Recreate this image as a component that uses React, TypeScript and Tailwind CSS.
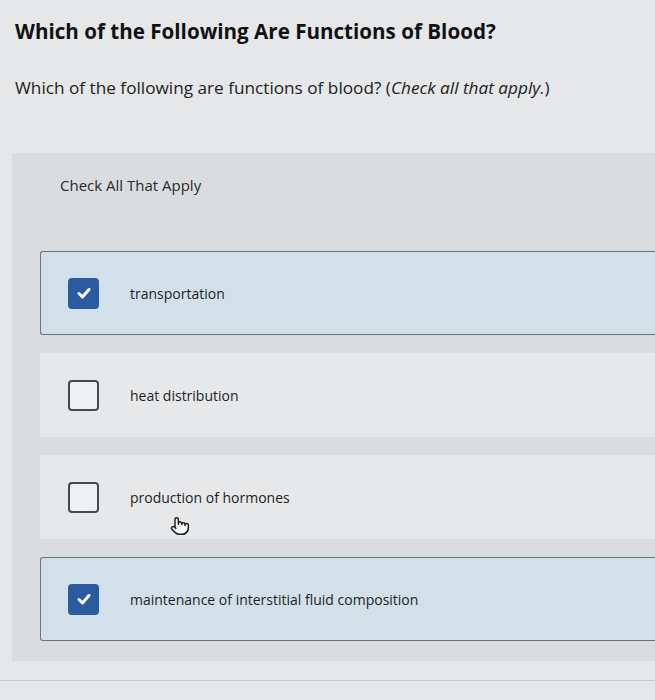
import React from "react";
import { Pointer } from "lucide-react";

const options = [
  { label: "transportation", checked: true },
  { label: "heat distribution", checked: false },
  { label: "production of hormones", checked: false },
  { label: "maintenance of interstitial fluid composition", checked: true },
];

function Check({ checked }: { checked: boolean }) {
  if (checked) {
    return (
      <div className="w-[31px] h-[31px] rounded-[4px] bg-[#2a5aa0] flex items-center justify-center shrink-0">
        <svg width="16" height="16" viewBox="0 0 16 16">
          <path d="M3 8.5 L6.5 12 L13 4.5" fill="none" stroke="#ffffff" strokeWidth="3" strokeLinecap="round" strokeLinejoin="round" />
        </svg>
      </div>
    );
  }
  return <div className="w-[31px] h-[31px] rounded-[4px] border-2 border-[#444a50] bg-[#eef0f2] shrink-0" />;
}

export default function App() {
  return (
    <div
      className="w-[655px] h-[700px] overflow-hidden bg-[#e5e7e9] text-[#1c1c1c] relative"
      style={{ fontFamily: "'Open Sans', Lato, sans-serif" }}
    >
      <div className="pt-[17px] pl-[15px]">
        <h1 className="text-[20.6px] font-bold leading-[28px] text-[#111]">
          Which of the Following Are Functions of Blood?
        </h1>
        <p className="mt-[32px] text-[17.2px] leading-[22px] text-[#222]">
          Which of the following are functions of blood? (<i>Check all that apply.</i>)
        </p>
      </div>
      <div className="mt-[54px] ml-[12px] bg-[#dadde0] pl-[28px] pt-[22px] pb-[20px]">
        <div className="pl-[20px] text-[15px] leading-[20px] text-[#2a2a2a]">Check All That Apply</div>
        <div className="mt-[56px] flex flex-col gap-[18px]">
          {options.map((o, i) => (
            <div
              key={i}
              className={
                o.checked
                  ? "h-[84px] flex items-center bg-[#d2e0ea] border border-r-0 border-[#6d7378] rounded-l-[3px]"
                  : "h-[84px] flex items-center bg-[#e6e8ea] border border-transparent"
              }
            >
              <div className="pl-[27px] pr-[31px]">
                <Check checked={o.checked} />
              </div>
              <span className="text-[14px] text-[#1e1e1e]">{o.label}</span>
            </div>
          ))}
        </div>
      </div>
      <div className="absolute left-[170px] top-[516px] text-[#222]">
        <Pointer size={20} strokeWidth={1.8} fill="#ffffff" />
      </div>
      <div className="absolute left-0 right-0 top-[680px] h-px bg-[#c8cacc]" />
    </div>
  );
}
